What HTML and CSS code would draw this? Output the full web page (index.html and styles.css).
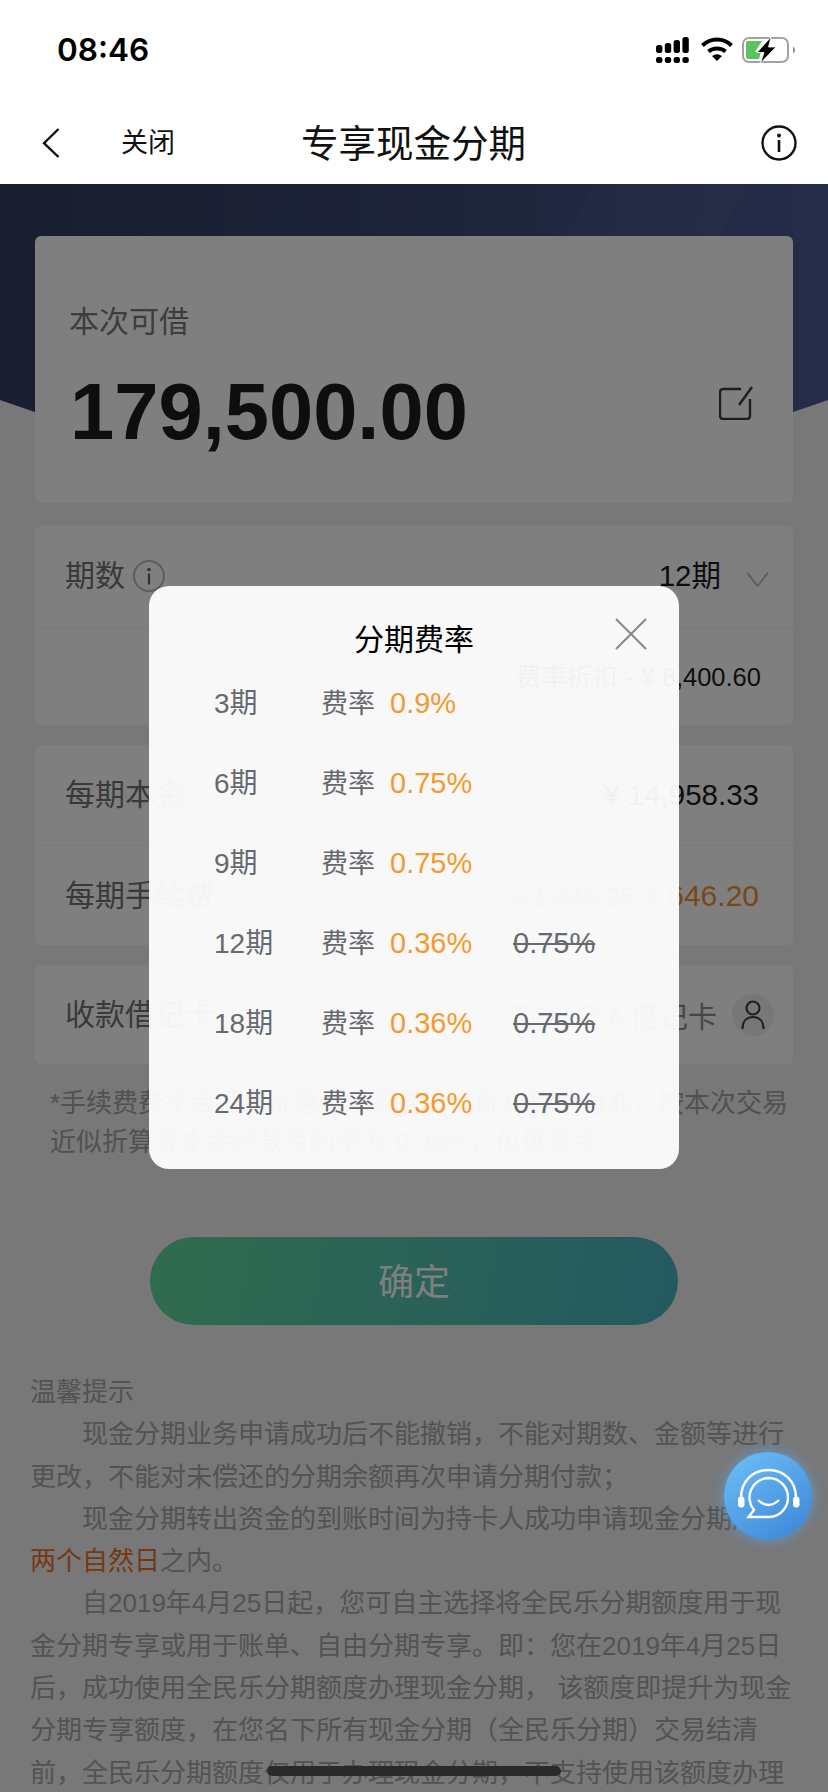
FILE: index.html
```html
<!DOCTYPE html>
<html lang="zh-CN">
<head>
<meta charset="utf-8">
<title>专享现金分期</title>
<link rel="stylesheet" href="styles.css">
</head>
<body>
<div class="phone">
  <header class="status">
    <span class="time">08:46</span>
    <div class="status-icons">
      <svg class="ic-signal" viewBox="0 0 33 26"><g fill="#000"><rect x="0" y="8" width="6.4" height="8" rx="2.5"/><rect x="8.8" y="6" width="6.4" height="10" rx="2.5"/><rect x="17.6" y="3" width="6.4" height="13" rx="2.5"/><rect x="26.4" y="0" width="6.4" height="16" rx="2.5"/><rect x="0" y="20" width="6.4" height="6" rx="2.5"/><rect x="8.8" y="20" width="6.4" height="6" rx="2.5"/><rect x="17.6" y="20" width="6.4" height="6" rx="2.5"/><rect x="26.4" y="20" width="6.4" height="6" rx="2.5"/></g></svg>
      <svg class="ic-wifi" viewBox="0 0 32 24"><g fill="none" stroke="#000" stroke-width="4"><path d="M1.5 8.5C9.5 0.5 22.5 0.5 30.5 8.5"/><path d="M7.5 14.5C12 10.5 20 10.5 24.5 14.5"/></g><path d="M16 24L11 19Q16 15.5 21 19Z" fill="#000"/></svg>
      <svg class="ic-battery" viewBox="0 0 53 26"><rect x="1" y="1" width="45" height="24" rx="6" fill="none" stroke="#a3a3a3" stroke-width="2"/><path d="M4 6a2 2 0 0 1 2-2H20L13 15H19L17 22H6a2 2 0 0 1-2-2Z" fill="#5cc25e"/><path d="M51 9.5V16.500q2-1 2-3.500t-2-3.500Z" fill="#8a8a8a"/><path d="M29 0L15 15.500H22L18.500 26L34 10H26.500Z" fill="#000" stroke="#fff" stroke-width="0.800"/></svg>
    </div>
  </header>

  <nav class="nav">
    <div class="nav-left">
      <svg class="ic-back" viewBox="0 0 18 30"><path d="M16.500 1L2 15.200L16.500 29" fill="none" stroke="#111" stroke-width="2.400"/></svg>
      <span class="nav-close">关闭</span>
    </div>
    <h1 class="nav-title">专享现金分期</h1>
    <div class="nav-right">
      <svg class="ic-info" viewBox="0 0 36 36"><circle cx="18" cy="18" r="16.500" fill="none" stroke="#111" stroke-width="2.400"/><circle cx="18" cy="10.500" r="2" fill="#111"/><rect x="16.700" y="15" width="2.600" height="12" fill="#111"/></svg>
    </div>
  </nav>

  <main class="main">
    <div class="banner"></div>
    <div class="content">
      <section class="card card-amount">
        <div class="amount-label">本次可借</div>
        <div class="amount-row">
          <span class="amount">179,500.00</span>
          <svg class="ic-edit" viewBox="0 0 34 34"><path d="M22 3H4a3 3 0 0 0-3 3V30a3 3 0 0 0 3 3H28a3 3 0 0 0 3-3V13" fill="none" stroke="#3d3d3d" stroke-width="2.400"/><path d="M33 1L20 19" stroke="#3d3d3d" stroke-width="2.400"/></svg>
        </div>
      </section>

      <section class="card">
        <div class="row row-term">
          <div class="row-left">
            <span class="row-label">期数</span>
            <svg class="ic-tip" viewBox="0 0 32 32"><circle cx="16" cy="16" r="15" fill="none" stroke="#b8b8b8" stroke-width="2"/><circle cx="16" cy="9.500" r="1.800" fill="#666"/><rect x="14.900" y="13.500" width="2.200" height="11" fill="#666"/></svg>
          </div>
          <div class="row-right">
            <span class="val-dark">12期</span>
            <svg class="ic-chevron" viewBox="0 0 24 16"><path d="M1 1L12 15L23 1" fill="none" stroke="#bdbdbd" stroke-width="2"/></svg>
          </div>
        </div>
        <div class="row row-discount">
          <span></span>
          <span class="val-small">费率折扣 - ¥ 8,400.60</span>
        </div>
      </section>

      <section class="card">
        <div class="row">
          <span class="row-label">每期本金</span>
          <span class="val-num">¥ 14,958.33</span>
        </div>
        <div class="row">
          <span class="row-label">每期手续费</span>
          <span class="val-fee"><s class="val-old">¥ 1,346.25</s> <span class="val-orange">¥ 646.20</span></span>
        </div>
      </section>

      <section class="card">
        <div class="row row-bank">
          <span class="row-label">收款借记卡</span>
          <div class="row-right">
            <span class="val-muted">工行 个人借记卡</span>
            <span class="person">
              <svg viewBox="0 0 24 30"><circle cx="12" cy="8" r="6.500" fill="none" stroke="#3f3f3f" stroke-width="2.200"/><path d="M1.500 29C1.500 21 6 17 12 17S22.500 21 22.500 29" fill="none" stroke="#3f3f3f" stroke-width="2.200"/></svg>
            </span>
          </div>
        </div>
      </section>

      <p class="note">*手续费费率会根据优惠活动调整，实际以账单为准，按本次交易<br>近似折算等本金还款月利率为 0.36%，仅供参考</p>

      <button class="confirm" type="button">确定</button>

      <section class="tips">
        <div>温馨提示</div>
        <p>现金分期业务申请成功后不能撤销，不能对期数、金额等进行<br><span class="noindent">更改，不能对未偿还的分期余额再次申请分期付款；</span></p>
        <p>现金分期转出资金的到账时间为持卡人成功申请现金分期后的<br><span class="noindent"><em class="hl">两个自然日</em>之内。</span></p>
        <p>自2019年4月25日起，您可自主选择将全民乐分期额度用于现<br>金分期专享或用于账单、自由分期专享。即：您在2019年4月25日<br>后，成功使用全民乐分期额度办理现金分期， 该额度即提升为现金<br>分期专享额度，在您名下所有现金分期（全民乐分期）交易结清<br>前，全民乐分期额度仅用于办理现金分期，不支持使用该额度办理</p>
      </section>
    </div>
  </main>

  <div class="overlay">
    <div class="modal">
      <h2 class="modal-title">分期费率</h2>
      <svg class="modal-close" viewBox="0 0 32 32"><path d="M1 1L31 31M31 1L1 31" stroke="#888" stroke-width="2"/></svg>
      <div class="rate-row"><span class="term">3期</span><span class="rate-label">费率</span><span class="rate">0.9%</span><span></span></div>
      <div class="rate-row"><span class="term">6期</span><span class="rate-label">费率</span><span class="rate">0.75%</span><span></span></div>
      <div class="rate-row"><span class="term">9期</span><span class="rate-label">费率</span><span class="rate">0.75%</span><span></span></div>
      <div class="rate-row"><span class="term">12期</span><span class="rate-label">费率</span><span class="rate">0.36%</span><s>0.75%</s></div>
      <div class="rate-row"><span class="term">18期</span><span class="rate-label">费率</span><span class="rate">0.36%</span><s>0.75%</s></div>
      <div class="rate-row"><span class="term">24期</span><span class="rate-label">费率</span><span class="rate">0.36%</span><s>0.75%</s></div>
    </div>
  </div>

  <div class="fab">
    <svg viewBox="0 0 88 88">
      <g fill="none" stroke="#fff" stroke-width="2.400">
        <path d="M17 46C17 29 29 18 44.500 18S72 29 72 46"/>
        <path d="M44.500 26a19.500 19.500 0 1 1 0 39H24.500l5.500-7A19.500 19.500 0 0 1 44.500 26Z"/>
        <path d="M34 48Q44.500 58 55 48"/>
      </g>
      <rect x="14" y="44.500" width="6.500" height="11" rx="3.200" fill="#fff"/>
      <rect x="69" y="44.500" width="6.500" height="11" rx="3.200" fill="#fff"/>
    </svg>
  </div>
  <div class="home-bar"></div>
</div>
</body>
</html>
```

FILE: styles.css
```css
* { box-sizing: border-box; }
html, body { margin: 0; padding: 0; }
body {
  font-family: "Liberation Sans", "Noto Sans CJK SC", sans-serif;
  color: #000;
  background: #fff;
}
.phone {
  position: relative;
  width: 828px;
  height: 1792px;
  overflow: hidden;
  background: #f0f0f0;
}

/* status bar */
.status {
  height: 102px;
  background: #fff;
  display: flex;
  justify-content: space-between;
  align-items: flex-start;
  padding: 31px 33px 0 57px;
}
.time {
  font-family: Inter, "Liberation Sans", sans-serif;
  font-weight: 600;
  font-size: 31.500px;
  line-height: 38px;
}
.status-icons { display: flex; align-items: flex-start; padding-top: 6px; }
.ic-signal { width: 33px; height: 26px; }
.ic-wifi { width: 32px; height: 24px; margin-left: 12px; }
.ic-battery { width: 53px; height: 26px; margin-left: 9px; }

/* nav */
.nav {
  height: 82px;
  background: #fff;
  display: grid;
  grid-template-columns: 1fr auto 1fr;
  align-items: center;
  padding: 0 31px 0 42px;
}
.nav-left { display: flex; align-items: center; }
.ic-back { width: 18px; height: 30px; }
.nav-close { font-size: 27px; line-height: 36px; margin-left: 61px; color: #111; }
.nav-title {
  margin: 2px 0 0 -12px;
  font-size: 37.500px;
  line-height: 50px;
  font-weight: 400;
  color: #111;
}
.nav-right { display: flex; justify-content: flex-end; }
.ic-info { width: 36px; height: 36px; }

/* page */
.main { background: #f0f0f0; }
.banner {
  height: 228px;
  background:
    linear-gradient(120deg, rgba(255, 255, 255, 0) 62%, rgba(255, 255, 255, 0.025) 62%, rgba(255, 255, 255, 0.025) 78%, rgba(255, 255, 255, 0) 78%),
    linear-gradient(95deg, #323c5e 0%, #3d4974 55%, #4c5a94 100%);
  clip-path: polygon(0 0, 100% 0, 100% 216px, 95.8% 228px, 4.2% 228px, 0 216px);
}
.content { position: relative; margin-top: -176px; }
.card {
  margin: 0 35px 20px;
  background: #fff;
  border-radius: 6px;
}
.card-amount {
  height: 267px;
  margin-bottom: 23px;
  padding: 68px 40px 0 34px;
}
.amount-label { font-size: 30px; line-height: 36px; color: #7a7a7a; }
.amount-row {
  display: flex;
  justify-content: space-between;
  align-items: center;
  margin-top: 27px;
  height: 90px;
}
.amount { font-size: 79.500px; line-height: 90px; font-weight: 700; color: #1c1c1c; margin-left: 1px; }
.ic-edit { width: 34px; height: 34px; margin-top: -18px; }

.row {
  height: 100px;
  display: flex;
  justify-content: space-between;
  align-items: center;
  padding: 0 34px 0 30px;
}
.row + .row { border-top: 1px solid #f0f0f0; }
.row-term { height: 101px; padding-right: 24px; align-items: flex-start; padding-top: 30px; }
.row-discount { height: 98px; padding-bottom: 4px; padding-right: 32px; }
.row-bank { height: 99px; padding-right: 19px; }
.row-left, .row-right { display: flex; align-items: center; }
.row-label { font-size: 30px; line-height: 40px; color: #727272; }
.ic-tip { width: 32px; height: 32px; margin-left: 8px; }
.val-dark { font-size: 29.500px; line-height: 40px; color: #1c1c1c; }
.ic-chevron { width: 23px; height: 15px; margin-left: 25px; margin-top: 6px; }
.val-small { font-size: 25.500px; color: #1c1c1c; }
.val-num { font-size: 29.500px; color: #1c1c1c; }
.val-fee { font-size: 28px; }
.val-old { color: #aaa; font-size: 26px; }
.val-orange { color: #f0902a; font-size: 30px; }
.val-muted { font-size: 29px; color: #8c8c8c; }
.person {
  width: 42px;
  height: 42px;
  margin-left: 15px;
  border-radius: 50%;
  background: #eee;
  display: flex;
  align-items: center;
  justify-content: center;
}
.person svg { width: 24px; height: 30px; }

.note {
  margin: 20px 30px 0 50px;
  font-size: 26px;
  line-height: 39px;
  color: #a2a2a2;
  white-space: nowrap;
}
.confirm {
  display: block;
  width: 528px;
  height: 88px;
  margin: 75px auto 0;
  padding: 0 0 4px;
  border: 0;
  border-radius: 44px;
  background: linear-gradient(100deg, #61d79c 0%, #49b2c2 100%);
  color: #fff;
  font-family: inherit;
  font-size: 36px;
}
.tips {
  margin: 46px 0 0 30px;
  font-size: 26px;
  line-height: 42.300px;
  color: #a6a6a6;
  white-space: nowrap;
}
.tips p { margin: 0; text-indent: 52px; }
.noindent { display: inline-block; text-indent: 0; margin-left: 0; }
.hl { font-style: normal; color: #e8702a; }

/* overlay and modal */
.overlay {
  position: absolute;
  left: 0;
  right: 0;
  top: 184px;
  bottom: 0;
  background: rgba(0, 0, 0, 0.5);
  display: flex;
  justify-content: center;
  align-items: flex-start;
  padding-top: 402px;
}
.modal {
  position: relative;
  width: 530px;
  height: 583px;
  padding: 32px 0 0 65px;
  background: rgba(255, 255, 255, 0.945);
  border-radius: 20px;
}
.modal-title {
  margin: 0 0 1px -65px;
  text-align: center;
  font-size: 30px;
  line-height: 44px;
  font-weight: 400;
  color: #000;
}
.modal-close { position: absolute; right: 32px; top: 32px; width: 32px; height: 32px; }
.rate-row {
  display: grid;
  grid-template-columns: 107px 69px 123px auto;
  align-items: center;
  height: 80px;
  font-size: 29px;
  color: #666a70;
}
.term { font-size: 28px; padding-bottom: 4px; }
.rate-label { font-size: 27px; padding-bottom: 4px; }
.rate { color: #f7982f; }

.fab {
  position: absolute;
  left: 724px;
  top: 1452px;
  width: 88px;
  height: 88px;
  border-radius: 50%;
  background: linear-gradient(145deg, #6fc0f7 0%, #3a84d6 100%);
  box-shadow: 0 0 14px rgba(90, 170, 240, 0.7);
}
.fab svg { display: block; width: 88px; height: 88px; }
.home-bar {
  position: absolute;
  left: 267px;
  top: 1766px;
  width: 294px;
  height: 10px;
  border-radius: 5px;
  background: #2a2a2a;
}
```
